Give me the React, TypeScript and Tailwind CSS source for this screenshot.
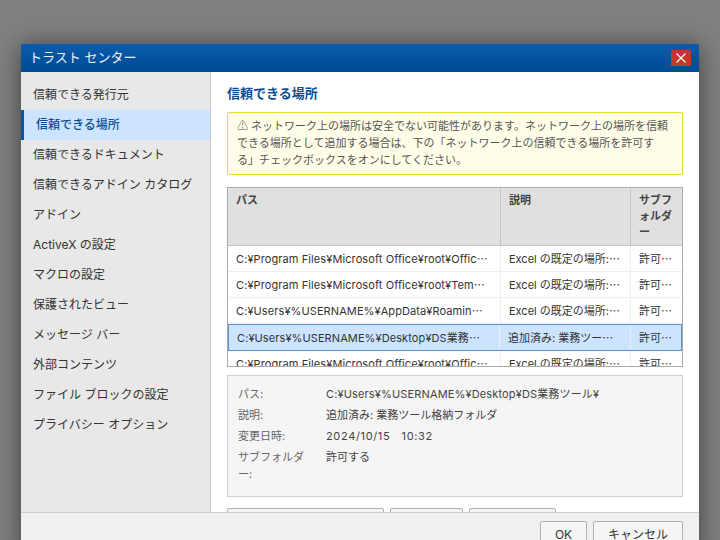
const font = "[font-family:'Inter','Noto_Sans_CJK_JP',sans-serif] [text-spacing-trim:space-all]";

const navItems = [
  "信頼できる発行元",
  "信頼できる場所",
  "信頼できるドキュメント",
  "信頼できるアドイン カタログ",
  "アドイン",
  "ActiveX の設定",
  "マクロの設定",
  "保護されたビュー",
  "メッセージ バー",
  "外部コンテンツ",
  "ファイル ブロックの設定",
  "プライバシー オプション",
];

const rows = [
  { path: "C:¥Program Files¥Microsoft Office¥root¥Offic⋯", desc: "Excel の既定の場所:⋯" },
  { path: "C:¥Program Files¥Microsoft Office¥root¥Tem⋯", desc: "Excel の既定の場所:⋯" },
  { path: "C:¥Users¥%USERNAME%¥AppData¥Roamin⋯", desc: "Excel の既定の場所:⋯" },
  { path: "C:¥Users¥%USERNAME%¥Desktop¥DS業務⋯", desc: "追加済み: 業務ツー⋯", selected: true },
  { path: "C:¥Program Files¥Microsoft Office¥root¥Offic⋯", desc: "Excel の既定の場所:⋯" },
];

const details = [
  { label: "パス:", value: "C:¥Users¥%USERNAME%¥Desktop¥DS業務ツール¥", cls: "tracking-[0.15px]" },
  { label: "説明:", value: "追加済み: 業務ツール格納フォルダ", cls: "" },
  { label: "変更日時:", value: "2024/10/15\u00a0\u00a0\u00a010:32", cls: "tracking-[0.65px]" },
  { label: "サブフォルダー:", value: "許可する", cls: "" },
];

function Nav() {
  return (
    <nav className="flex w-[190px] shrink-0 flex-col border-r border-[#c8c8c8] bg-[#e8e8e8] pt-[8px]">
      {navItems.map((item) => {
        const active = item === "信頼できる場所";
        return (
          <div
            key={item}
            className={
              active
                ? "flex h-[30px] items-center border-l-[3px] border-[#0a559f] bg-[#cce4ff] pl-[12px] text-[12px] font-medium text-[#0b4f96]"
                : "flex h-[30px] items-center pl-[12px] text-[12px] text-[#333333]"
            }
          >
            {item}
          </div>
        );
      })}
    </nav>
  );
}

function LocationTable() {
  return (
    <div className="mt-[12px] h-[180px] overflow-hidden border border-[#aaaaaa] text-[11px] text-[#333333]">
      <div className="grid h-[58px] grid-cols-[273px_130px_1fr] border-b border-[#c4c4c4] bg-[#e0e0e0] font-bold leading-[16px] text-[#444444]">
        <div className="border-r border-[#c4c4c4] px-[8px] pt-[4px]">パス</div>
        <div className="border-r border-[#c4c4c4] px-[8px] pt-[4px]">説明</div>
        <div className="px-[8px] pt-[4px]">サブフォルダー</div>
      </div>
      {rows.map((row, i) => (
        <div
          key={i}
          className={
            row.selected
              ? "grid h-[27px] grid-cols-[271px_131px_1fr] items-center border border-[#5b94d6] bg-[#cce4ff]"
              : "grid h-[26px] grid-cols-[273px_130px_1fr] items-center border-b border-[#eeeeee] bg-white"
          }
        >
          <div className="overflow-hidden whitespace-nowrap border-r border-[#eeeeee] px-[8px] pt-[1px] leading-[24px] tracking-[0.1px]">{row.path}</div>
          <div className="overflow-hidden whitespace-nowrap border-r border-[#eeeeee] px-[8px] pt-[1px] leading-[24px]">{row.desc}</div>
          <div className="overflow-hidden whitespace-nowrap px-[8px] pt-[1px] leading-[24px]">許可⋯</div>
        </div>
      ))}
    </div>
  );
}

function Details() {
  return (
    <div className="mt-[8px] flex h-[122px] flex-col gap-[4px] border border-[#d0d0d0] bg-[#f5f5f5] px-[10px] pt-[10px] text-[11px] leading-[17px]">
      {details.map((d) => (
        <div key={d.label} className="flex">
          <div className="mr-[10px] w-[78px] shrink-0 text-[#666666]">{d.label}</div>
          <div className={`text-[#444444] ${d.cls}`}>{d.value}</div>
        </div>
      ))}
    </div>
  );
}

function Btn({ label, className }: { label: string; className: string }) {
  return (
    <button className={`h-[28px] shrink-0 rounded-[2px] border border-[#b0b0b0] bg-[#f5f5f5] text-[12px] text-[#333333] ${className}`}>
      {label}
    </button>
  );
}

export default function App() {
  return (
    <div lang="ja" className={`h-[540px] w-[720px] overflow-hidden bg-[#808080] pl-[21px] pt-[44px] ${font}`}>
      <div className="flex h-[520px] w-[678px] flex-col bg-white shadow-[0_2px_24px_rgba(0,0,0,0.5)]">
        <header className="flex h-[28px] shrink-0 items-center justify-between bg-gradient-to-b from-[#0a5cab] to-[#004a94] pl-[8px] pr-[8px]">
          <span className="text-[13px] text-[#e8f2fb]">トラスト センター</span>
          <button className="flex h-[16px] w-[20px] items-center justify-center rounded-[1px] bg-[#c0392b]">
            <svg width="10" height="10" viewBox="0 0 10 10" fill="none" stroke="#ffffff" strokeWidth="1.1">
              <path d="M0.5 0.5 L9.5 9.5 M9.5 0.5 L0.5 9.5" />
            </svg>
          </button>
        </header>

        <div className="flex h-[440px] shrink-0 overflow-hidden">
          <Nav />
          <main className="min-w-0 flex-1 px-[16px] pt-[12px]">
            <h2 className="text-[13px] font-bold leading-[18px] text-[#0b4f96]">信頼できる場所</h2>
            <div className="mt-[10px] h-[63px] rounded-[2px] border border-[#e6d93c] bg-[#fffde7] px-[9px] py-[4px] text-[11px] leading-[17px] text-[#555555]">
              <span className="text-[#888888] [font-family:'Noto_Sans_CJK_JP','DejaVu_Sans',sans-serif]">⚠</span> ネットワーク上の場所は安全でない可能性があります。ネットワーク上の場所を信頼できる場所として追加する場合は、下の「ネットワーク上の信頼できる場所を許可する」チェックボックスをオンにしてください。
            </div>
            <LocationTable />
            <Details />
            <div className="mt-[11px] flex gap-[6px]">
              <Btn label="新しい場所の追加..." className="w-[157px]" />
              <Btn label="削除" className="w-[73px]" />
              <Btn label="変更..." className="w-[87px]" />
            </div>
          </main>
        </div>

        <footer className="flex flex-1 justify-end gap-[6px] border-t border-[#cccccc] bg-[#f0f0f0] pr-[16px] pt-[8px]">
          <Btn label="OK" className="w-[47px]" />
          <Btn label="キャンセル" className="w-[90px]" />
        </footer>
      </div>
    </div>
  );
}
